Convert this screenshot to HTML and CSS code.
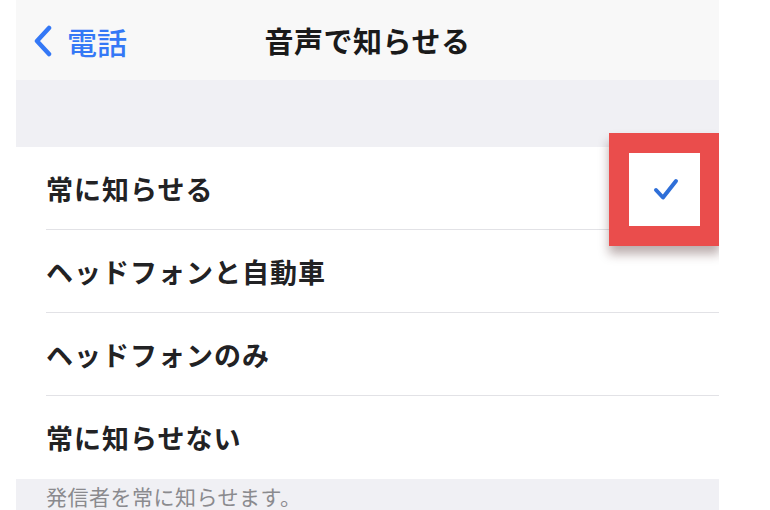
FILE: index.html
```html
<!DOCTYPE html>
<html lang="ja">
<head>
    <meta charset="UTF-8">
    <meta name="viewport" content="width=device-width, initial-scale=1.0">
    <title>音声で知らせる</title>
    <link rel="stylesheet" href="styles.css">
</head>
<body>
    <div class="screen">
        <div class="navbar">
            <a class="back" href="#">
                <svg class="chevron" width="20" height="32" viewBox="0 0 20 32">
                    <path d="M16 3 L4 16 L16 29" fill="none" stroke="#3478f6" stroke-width="4.5" stroke-linecap="round" stroke-linejoin="round"/>
                </svg>
                <span>電話</span>
            </a>
            <div class="title">音声で知らせる</div>
            <div></div>
        </div>
        <div class="spacer"></div>
        <ul class="list">
            <li class="row">
                <span>常に知らせる</span>
                <span class="mark">
                    <svg width="28" height="26" viewBox="0 0 28 26">
                        <path d="M4 14 L11 21.5 L24 5" fill="none" stroke="#2f6fd8" stroke-width="4" stroke-linecap="round" stroke-linejoin="round"/>
                    </svg>
                </span>
            </li>
            <li class="row"><span>ヘッドフォンと自動車</span></li>
            <li class="row"><span>ヘッドフォンのみ</span></li>
            <li class="row"><span>常に知らせない</span></li>
        </ul>
        <div class="footer">発信者を常に知らせます。</div>
    </div>
</body>
</html>
```
FILE: styles.css
```css
body {
    margin: 0;
    background: #ffffff;
    font-family: "Noto Sans CJK JP", "Noto Sans", sans-serif;
}
.screen {
    width: 703px;
    margin-left: 16px;
    height: 510px;
    overflow: hidden;
    background: #f0f0f4;
}
.navbar {
    height: 80px;
    background: #f8f8f8;
    display: grid;
    grid-template-columns: 1fr auto 1fr;
    align-items: center;
}
.back {
    display: flex;
    align-items: center;
    gap: 14px;
    padding-left: 17px;
    color: #3478f6;
    text-decoration: none;
    font-size: 30px;
    font-weight: 500;
    margin-top: 2px;
}
.title {
    font-size: 29px;
    font-weight: 700;
    color: #1a1a1a;
    letter-spacing: 0.5px;
}
.spacer {
    height: 67px;
}
.list {
    list-style: none;
    margin: 0;
    padding: 0 0 0 30px;
    background: #ffffff;
}
.row {
    height: 82px;
    display: flex;
    align-items: center;
    justify-content: space-between;
    border-bottom: 1px solid #e2e2e6;
    font-size: 27px;
    font-weight: 700;
    color: #222224;
    letter-spacing: 1px;
}
.row:last-child {
    border-bottom: none;
    height: 83px;
}
.mark {
    width: 71px;
    height: 73px;
    margin-right: 19px;
    margin-top: 2px;
    display: flex;
    align-items: center;
    justify-content: center;
    box-shadow: 0 0 0 20px #ea4d4c, 0 8px 10px 20px rgba(60, 20, 20, 0.35);
}
.mark svg {
    margin-left: 2px;
}
.footer {
    padding: 4px 0 0 30px;
    font-size: 21px;
    line-height: 26px;
    letter-spacing: 0.5px;
    color: #8a8a8e;
}
```
